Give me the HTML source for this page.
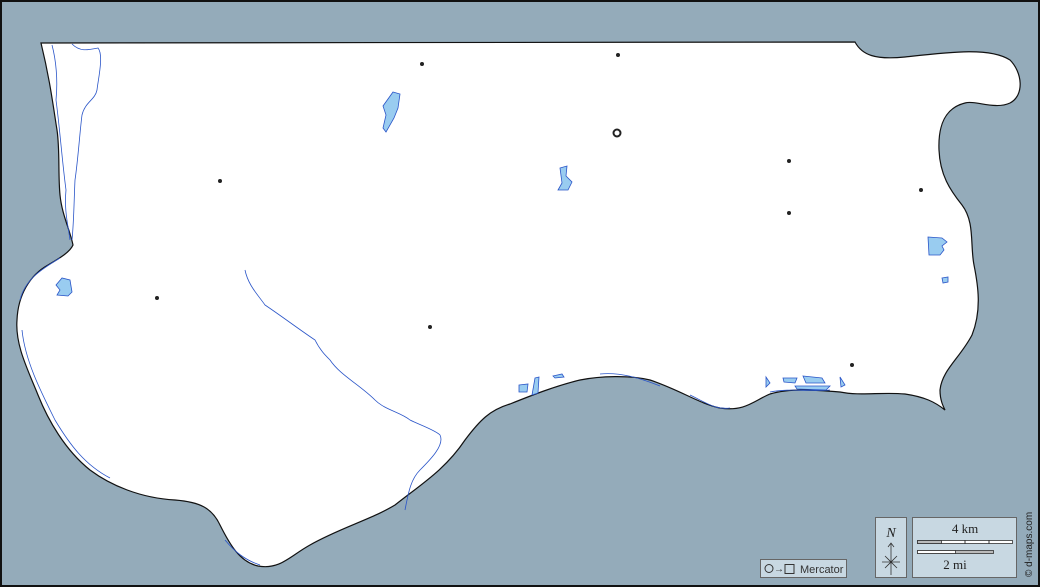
<!DOCTYPE html>
<html><head><meta charset="utf-8"><style>
html,body{margin:0;padding:0;background:#94abba;}
svg{display:block;}
text{font-family:"Liberation Serif",serif;}
</style></head><body>
<svg width="1040" height="587" viewBox="0 0 1040 587" xmlns="http://www.w3.org/2000/svg">
<rect x="0" y="0" width="1040" height="587" fill="#94abba"/>
<path fill="#fff" stroke="#111" stroke-width="1.2" d="M41,43 L855,42 C862,55 875,60 905,57 C950,52 990,47 1010,60 C1022,72 1025,95 1010,103 C995,110 975,100 965,103 C945,108 938,125 939,150 C940,175 950,190 962,205 C975,222 970,245 974,265 C978,285 982,310 972,335 C960,358 942,370 940,390 C940,400 943,406 945,410 C935,402 925,397 905,394 C880,392 860,396 840,392 C815,390 790,388 770,394 C755,400 745,412 720,408 C700,404 680,390 650,380 C630,375 600,376 580,380 C555,386 530,396 510,404 C490,410 480,420 465,440 C445,470 420,485 395,505 C370,520 340,528 310,545 C290,556 280,570 258,566 C240,562 230,545 220,525 C212,508 200,502 175,500 C140,498 110,485 90,470 C65,450 48,420 38,395 C28,370 15,345 17,320 C18,295 30,275 48,265 C60,258 70,252 73,245 C70,230 62,215 60,195 C58,175 60,150 57,130 C53,105 50,80 41,43 Z"/>
<g fill="none" stroke="#2a55c8" stroke-width="0.8">
<path d="M72,44 C80,52 88,50 98,48 C104,55 98,80 97,90 C95,100 85,102 82,115 C80,130 78,160 75,180 C74,200 74,220 72,240"/>
<path d="M52,45 C56,60 58,80 56,100 C60,130 62,160 66,190 C64,210 68,225 70,240"/>
<path d="M20,300 C25,280 40,270 60,258"/>
<path d="M22,330 C25,360 40,390 55,420 C70,445 85,465 110,478"/>
<path d="M245,270 C248,285 258,295 265,305 C280,315 300,330 315,340 C320,350 325,355 330,360 C340,375 360,385 375,400 C385,410 400,412 410,420 C420,425 435,430 440,435 C445,445 430,460 420,470 C410,480 408,495 405,510"/>
<path d="M600,374 C620,372 640,378 660,386"/>
<path d="M690,395 C705,402 715,410 730,408"/>
<path d="M770,392 C790,388 810,392 830,390"/>
<path d="M225,540 C235,552 245,560 260,565"/>
</g>
<g fill="#99ccf0" stroke="#2a55c8" stroke-width="0.8">
<path d="M393,92 L400,94 L398,108 L394,118 L386,132 L383,128 L386,115 L383,106 Z"/>
<path d="M560,168 L567,166 L566,176 L572,182 L568,190 L558,190 L562,183 Z"/>
<path d="M56,285 L62,278 L70,280 L72,292 L68,296 L57,295 L60,290 Z"/>
<path d="M928,237 L942,238 L947,242 L942,246 L944,250 L940,255 L929,255 Z"/>
<path d="M942,278 L948,277 L948,282 L943,283 Z"/>
<path d="M519,385 L528,384 L527,392 L519,392 Z"/>
<path d="M535,378 L539,377 L538,393 L532,395 Z"/>
<path d="M553,376 L562,374 L564,377 L555,378 Z"/>
<path d="M783,378 L797,378 L795,383 L784,382 Z"/>
<path d="M803,376 L822,378 L825,383 L806,383 Z"/>
<path d="M795,386 L830,386 L826,390 L797,389 Z"/>
<path d="M840,377 L845,385 L841,387 Z"/>
<path d="M766,377 L770,383 L766,387 Z"/>
</g>
<g fill="#222">
<circle cx="422" cy="64" r="2"/><circle cx="618" cy="55" r="2"/><circle cx="220" cy="181" r="2"/>
<circle cx="789" cy="161" r="2"/><circle cx="789" cy="213" r="2"/><circle cx="921" cy="190" r="2"/>
<circle cx="157" cy="298" r="2"/><circle cx="430" cy="327" r="2"/><circle cx="852" cy="365" r="2"/>
</g>
<circle cx="617" cy="133" r="3.5" fill="none" stroke="#222" stroke-width="2"/>
<rect x="1" y="1" width="1038" height="585" fill="none" stroke="#111" stroke-width="2"/>
<rect x="760.5" y="559.5" width="86" height="18" fill="#c8d8e2" stroke="#666"/>
<circle cx="769" cy="568.5" r="4" fill="none" stroke="#333"/>
<text x="774" y="572" font-size="10" fill="#333">→</text>
<rect x="785" y="564.5" width="9" height="9" fill="none" stroke="#333"/>
<text x="800" y="573" font-size="11" fill="#333" style="font-family:'Liberation Sans',sans-serif">Mercator</text>
<rect x="875.5" y="517.5" width="31" height="60" fill="#c8d8e2" stroke="#666"/>
<text x="891" y="537" font-size="14" font-style="italic" text-anchor="middle" fill="#222">N</text>
<path d="M891,543 L891,575 M888,547 L891,543 L894,547 M882,562 L900,562 M885,556 L897,568 M897,556 L885,568" stroke="#333" stroke-width="0.8" fill="none"/>
<rect x="912.5" y="517.5" width="104" height="60" fill="#c8d8e2" stroke="#666"/>
<text x="965" y="533" font-size="13" text-anchor="middle" fill="#222">4 km</text>
<rect x="917.5" y="540.5" width="95" height="3" fill="#fff" stroke="#333" stroke-width="0.8"/>
<rect x="917.5" y="540.5" width="24" height="3" fill="#bbb" stroke="#333" stroke-width="0.8"/>
<path d="M965,540 V544 M989,540 V544" stroke="#333"/>
<rect x="917.5" y="550.5" width="76" height="3" fill="#bbb" stroke="#333" stroke-width="0.8"/>
<rect x="917.5" y="550.5" width="38" height="3" fill="#fff" stroke="#333" stroke-width="0.8"/>
<text x="955" y="569" font-size="13" text-anchor="middle" fill="#222">2 mi</text>
<text transform="translate(1032,577) rotate(-90)" font-size="10" fill="#222" style="font-family:'Liberation Sans',sans-serif">© d-maps.com</text>
</svg>
</body></html>
